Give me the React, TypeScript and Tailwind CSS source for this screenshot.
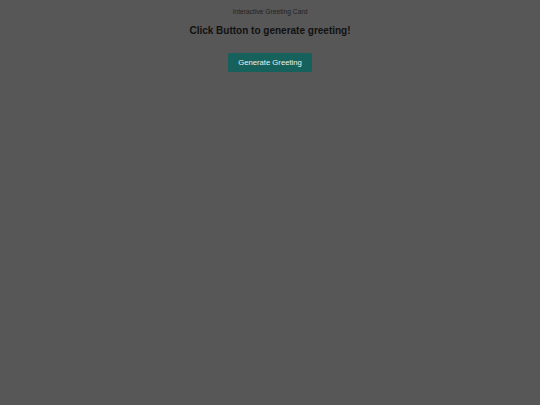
export default function App() {
  return (
    <div className="min-h-[405px] w-full bg-[#575757] font-['Liberation_Sans',Arial,sans-serif]">
      <div className="flex flex-col items-center pt-[8px]">
        <p className="text-[6.7px] leading-[8px] text-[#222]">Interactive Greeting Card</p>
        <h1 className="mt-[9px] text-[10px] font-bold leading-[12px] text-[#111]">
          Click Button to generate greeting!
        </h1>
        <button className="mt-[16px] h-[19px] w-[84px] rounded-[2px] bg-[#17615c] text-[7.7px] text-[#e6f2f0]">
          Generate Greeting
        </button>
      </div>
    </div>
  );
}
